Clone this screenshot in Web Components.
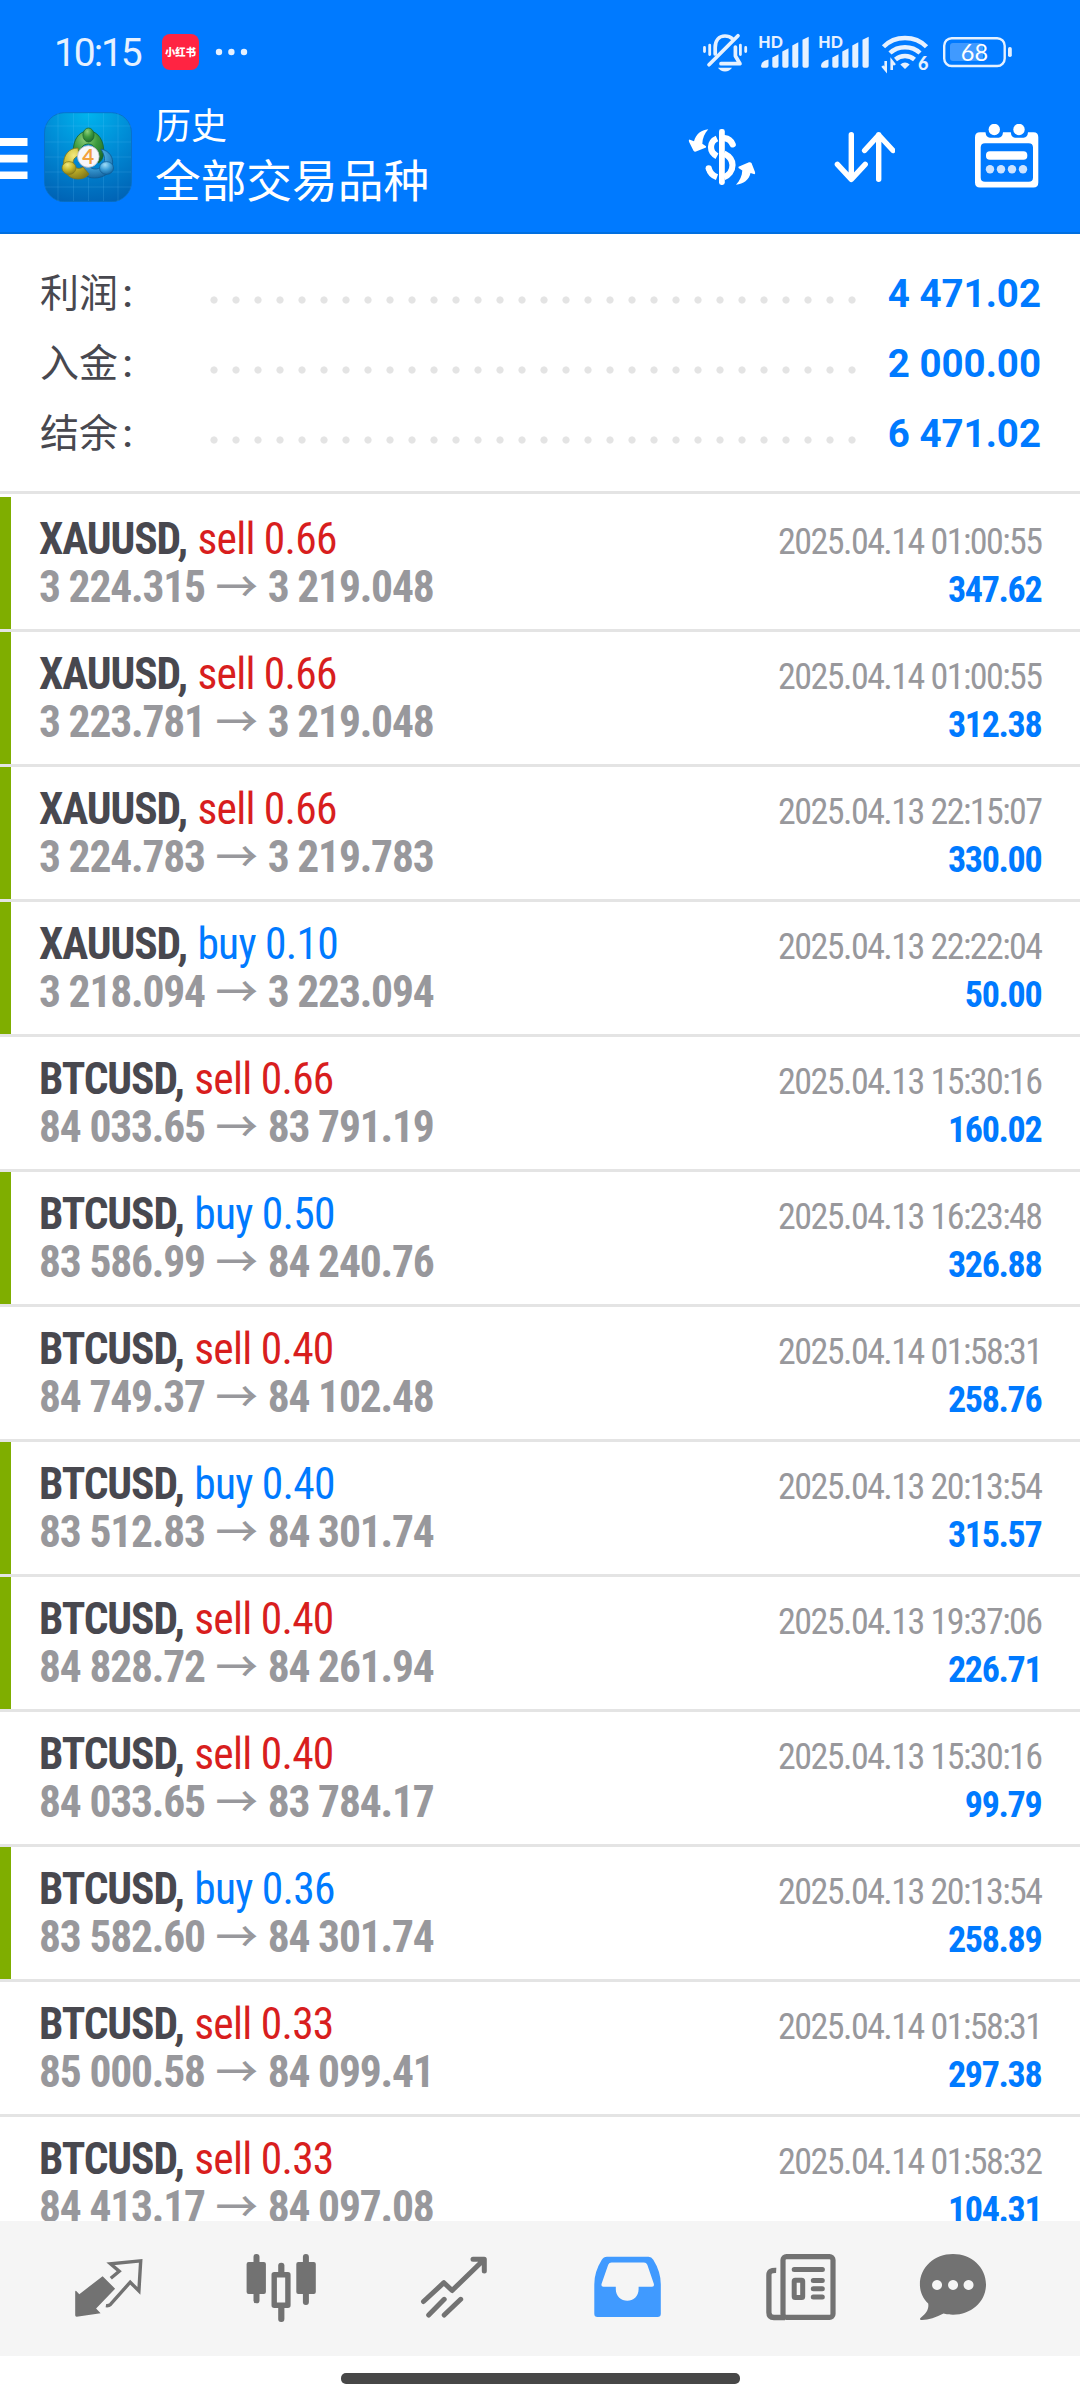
<!DOCTYPE html>
<html lang="zh-CN">
<head>
<meta charset="utf-8">
<title>历史</title>
<style>
html,body{margin:0;padding:0;background:#fff}
body{width:1080px;height:2400px;overflow:hidden;font-family:Roboto,"Noto Sans CJK SC",sans-serif}
</style>
</head>
<body>
<history-app></history-app>
<script>
const define = (name, html, setup) => {
  const t = document.createElement('template');
  t.innerHTML = html;
  customElements.define(name, class extends HTMLElement {
    constructor() {
      super();
      this.attachShadow({mode: 'open'}).appendChild(t.content.cloneNode(true));
    }
    connectedCallback() { if (setup) setup(this, this.shadowRoot); }
  });
};

define('app-logo', `
<style>:host{display:block;width:88px;height:90px}svg{display:block}</style>
<svg width="88" height="90" viewBox="44 112 88 90">
<defs>
<radialGradient id="bg" cx=".5" cy="0" r="1.05"><stop offset="0" stop-color="#00b4ee"/><stop offset=".55" stop-color="#0086d2"/><stop offset="1" stop-color="#0062b4"/></radialGradient>
<radialGradient id="g" cx=".4" cy=".25" r=".8"><stop offset="0" stop-color="#8fd07a"/><stop offset=".5" stop-color="#3c9a3e"/><stop offset="1" stop-color="#1c6a2c"/></radialGradient>
<radialGradient id="y" cx=".4" cy=".25" r=".8"><stop offset="0" stop-color="#f3ea80"/><stop offset=".5" stop-color="#c9b92c"/><stop offset="1" stop-color="#857a18"/></radialGradient>
<radialGradient id="b" cx=".4" cy=".25" r=".8"><stop offset="0" stop-color="#9fdcf8"/><stop offset=".5" stop-color="#3c9fd8"/><stop offset="1" stop-color="#12609c"/></radialGradient>
</defs>
<rect x="44.5" y="112.7" width="87" height="89" rx="20" fill="url(#bg)" stroke="#0a6fc0" stroke-width=".8"/>
<path d="M58 113v88M73.500 113v88M88.500 113v88M103.500 113v88M118 113v88M45 126h86M45 142h86M45 157h86M45 172h86M45 187h86" stroke="#6fd0ff" stroke-opacity=".16" fill="none"/>
<path d="M73.500 155C72 140 79 131 88.500 131S105 141 103.500 154c-.5 4-2 7-5 9l-5-5c4-5 2-14-5-14s-8.500 6-8 11z" fill="url(#g)" stroke="#17602c" stroke-width=".8"/>
<path d="M101 149c9 2 12.500 9 11.500 15.500-1.500 8.500-9 13.500-18 13.500-8 0-12-4-14-10l7-3c5 6 13 5 16-1 2-5 1-9-2.500-15z" fill="url(#b)" stroke="#0f5a92" stroke-width=".8"/>
<path d="M78 148c-9 0-14.500 7-14.500 16 0 9 6 15 14.500 15 5 0 9-2 11-5l-6-7c-4 3-10 1-10-4 0-4 3-7 6-7z" fill="url(#y)" stroke="#80761a" stroke-width=".8"/>
<ellipse cx="88.500" cy="135" rx="5.600" ry="7" fill="url(#g)" stroke="#17602c" stroke-width=".7"/>
<ellipse cx="69" cy="168" rx="7" ry="6.400" fill="url(#y)" stroke="#80761a" stroke-width=".7"/>
<ellipse cx="106.500" cy="168" rx="7" ry="6.400" fill="url(#b)" stroke="#0f5a92" stroke-width=".7"/>
<circle cx="88.300" cy="156.500" r="10.800" fill="#f7f7fa" stroke="#b9b9c4" stroke-width=".8"/>
<text x="88.300" y="163.800" text-anchor="middle" font-family="Lato,sans-serif" font-weight="700" font-size="20.500" fill="#f2a13c">4</text>
</svg>`);

define('status-bar', `
<style>
:host{display:flex;align-items:center;height:104px;color:#e6f1ff}
.time{margin-left:54px;width:98px;font-size:39px;line-height:104px;letter-spacing:-2.1px;padding-top:1px}
.app{display:flex;align-items:center;justify-content:center;width:37px;height:36px;margin-left:10px;border-radius:8px;background:#ff2442;color:#fff;font:900 10.300px/36px "Noto Sans CJK SC",sans-serif}
.more{margin-left:16px}
.sys{margin-left:auto;margin-right:65px}
svg{display:block}
</style>
<span class="time">10:15</span>
<span class="app">小红书</span>
<svg class="more" width="34" height="8" fill="#e6f1ff"><circle cx="4" cy="4" r="3.200"/><circle cx="16.400" cy="4" r="3.200"/><circle cx="29" cy="4" r="3.200"/></svg>
<svg class="sys" width="315" height="44" viewBox="700 30 315 44" fill="#e6f1ff">
<g fill="none" stroke="#e6f1ff" stroke-width="3.700" stroke-linecap="round" stroke-linejoin="round">
<path d="M715.200 54V47.500C715.200 40.500 719 36 725 36c3 0 5.500 1 7.300 2.600M735.400 47v9l4.600 7.700H721"/>
<path d="M709 64.700 738 35.700"/>
<path d="M704.500 47.500v4M709.700 45.200v9.300M740.400 45.200v9.300M745.700 47.500v4" stroke-width="2.800"/>
</g>
<path d="M718 67.800h14c-1.500 2.400-4 3.600-7 3.600s-5.500-1.200-7-3.600z"/>
<g id="sig">
<text x="758.300" y="48" font-family="Lato,sans-serif" font-weight="900" font-size="16" textLength="24.500" lengthAdjust="spacingAndGlyphs">HD</text>
<path d="M761 66q0-5 7.500-6.500v6.500q0 1.700-1.700 1.700h-4.300q-1.500 0-1.500-1.700zM772.300 57.500l6.200-3.200v11.700q0 1.700-1.700 1.700h-2.800q-1.700 0-1.700-1.700zM782.300 51.500l6.200-3.200v17.700q0 1.700-1.700 1.700h-2.800q-1.700 0-1.700-1.700zM792.300 45.500l6-3.200v23.700q0 1.700-1.700 1.700h-2.600q-1.700 0-1.700-1.700zM802.500 39.800l6.200-3v29.200q0 1.700-1.700 1.700h-2.800q-1.700 0-1.700-1.700z"/>
</g>
<use href="#sig" x="60"/>
<g fill="none" stroke="#e6f1ff" stroke-width="4.500">
<path d="M883.500 46.800Q892 38 905 38t21.500 8.800M890 53Q896 47.200 905 47.200t15 5.800M895.500 59.500Q899.500 56 905 56t9.500 3.500"/>
</g>
<path d="M900.300 64.500q4.700-4 9.400 0L905 69z"/>
<path d="M885.700 61v9l-3.400-4M891.700 70v-9l3.200 4" fill="none" stroke="#e6f1ff" stroke-width="2.600"/>
<text x="918" y="70.300" font-family="Lato,sans-serif" font-weight="900" font-size="18">6</text>
<rect x="944.200" y="38.200" width="60.500" height="27.800" rx="7.500" fill="none" stroke="#e6f1ff" stroke-width="2.400"/>
<rect x="950" y="43" width="33" height="18" rx="3" fill="#409aff"/>
<rect x="1008" y="47" width="3.800" height="10" rx="1.800"/>
<text x="974.500" y="61" text-anchor="middle" font-family="Lato,sans-serif" font-size="23.500" fill="#fff">68</text>
</svg>`);

define('title-bar', `
<style>
:host{display:flex;height:128px;border-bottom:2px solid #006fe0;color:#fff;font-family:"Noto Sans CJK SC",sans-serif}
svg{display:block}
.menu{margin-top:34px;width:28px;flex:none}
app-logo{margin:8px 0 0 16px}
.t{margin-left:23px;display:flex;flex-direction:column;margin-top:-3px}
.a{font-size:36px;line-height:44px}
.b{font-size:45.700px;line-height:60px;margin-top:3px}
.acts{margin:20px 40px 0 auto;display:flex;align-items:flex-start}
.acts svg+svg{margin-left:76px}
.acts svg:last-child{margin-left:77px}
</style>
<svg class="menu" width="28" height="41" fill="#fff"><path d="M0 0h27.500v8H0zM0 16.800h27.500v7.600H0zM0 33.500h27.500v7.500H0z"/></svg>
<app-logo></app-logo>
<div class="t"><span class="a">历史</span><span class="b">全部交易品种</span></div>
<div class="acts">
<svg width="70" height="68" viewBox="687 124 70 68" fill="#fff">
<rect x="719" y="129" width="5.800" height="56" rx="2.400"/>
<g fill="none" stroke="#fff" stroke-width="6.200">
<path d="M717 138.500C709 142 709 152 717 156.200" />
<path d="M724.500 138.200c5 .6 7 3.500 8.200 6.200" stroke-linecap="round"/>
<path d="M724 153.500c5 2.500 8.500 6 8.500 11.500 0 6-4 10.500-8.500 12.200"/>
<path d="M708.800 168.500c1.200 4.500 4 7.200 8.200 8.700" />
</g>
<circle cx="708.700" cy="168.300" r="3.100"/>
<path d="M708.300 129.300C701 130 696 134 694 141.300L689.300 139.500Q688.500 140 689 141.800L693.500 150.800Q694.500 152 696 151.500L706 147.500V146.300L702.300 143.800C702.500 138 704.500 133.500 708.300 129.300z"/>
<path d="M736 184.700C743.500 184 749 180 750.500 173L754.500 174.300Q755.500 174 755 172L751.500 163Q750.500 161.800 749 162.300L738.500 166.800V168L742.300 170.500C742 176 740 180.500 736 184.700z"/>
</svg>
<svg width="62" height="60" viewBox="833 124 62 60" fill="none" stroke="#fff" stroke-width="5.400" stroke-linecap="round" stroke-linejoin="round"><path d="M851.300 134.700v44.500M837.400 164.300l13.900 15 13.900-15M878.700 179.200v-44.500M864.600 150.500l14.100-15.500 14.300 15.500"/></svg>
<svg width="68" height="68" viewBox="972 124 68 68" fill="#fff">
<path fill-rule="evenodd" d="M980 132.300h5.500Q986 137.700 990 137.700h8.500q4 0 4.500-5.400h7.800Q1011.300 137.700 1015 137.700h8.500q4 0 4.500-5.400h5.500q4.800 0 4.800 5v45.200q0 5-4.800 5H980q-5 0-5-5v-45.200q0-5 5-5zM985 143.200q-4.300 0-4.300 4.300v30q0 4.300 4.300 4.300h43.700q4.300 0 4.300-4.300v-30q0-4.300-4.300-4.300z"/>
<circle cx="994.300" cy="129.500" r="5.700"/><circle cx="1019" cy="129.500" r="5.700"/>
<rect x="986" y="151.300" width="41.300" height="8.400" rx="3.800"/>
<g fill="#cce3ff"><circle cx="990" cy="169.300" r="4.200"/><circle cx="1001" cy="169.300" r="4.200"/><circle cx="1012" cy="169.300" r="4.200"/><circle cx="1023" cy="169.300" r="4.200"/></g>
</svg>
</div>`);

define('summary-row', `
<style>
:host{display:flex;align-items:center;height:70px;padding:0 39px 0 40px;line-height:70px}
.l{width:162.500px;font-size:39px;color:#48484f;font-family:"Noto Sans CJK SC",sans-serif}
.c{font:500 39px/70px Roboto,sans-serif;margin-left:4.500px}
.d{width:660px;height:10px;background:radial-gradient(circle at 11px 5px,#e4e4e4 3.200px,transparent 4px) 0 0/22px 10px;margin-top:16px}
.v{margin-left:auto;font-size:38.500px;font-weight:700;color:#007aff;padding-top:3px}
</style>
<span class="l"><slot name="label"></slot><span class="c">:</span></span><i class="d"></i><span class="v"><slot></slot></span>`);

define('deal-row', `
<style>
:host{display:block;box-sizing:border-box;height:135px;border-bottom:3px solid #e4e4e4}
.in{box-sizing:border-box;height:132px;padding:19px 38px 0 28px;border-left:11px solid transparent}
:host([closed]) .in{border-left-color:#7fae00}
.ln{display:flex;justify-content:space-between;align-items:baseline;height:48px;line-height:48px;font-family:"Roboto Condensed",Roboto,sans-serif;font-stretch:75%;white-space:pre}
.s{font-size:43.500px;color:#48484f;letter-spacing:-1.1px}
.s b{font-weight:700}
.q{color:#d81e1e;letter-spacing:-.75px;margin-left:1.500px;font-weight:430}
:host([side=buy]) .q{color:#007aff}
.p{font-size:43.500px;font-weight:700;color:#98989c;letter-spacing:-1.2px}
.ar{letter-spacing:0;margin:0 .8px 0 2px;font:500 42.500px/30px "Noto Sans CJK SC",sans-serif}
.d{font-size:36px;color:#98989c;letter-spacing:-1.55px;margin-right:.5px}
.r{font-size:36px;font-weight:700;color:#007aff;letter-spacing:-1.35px;margin-right:.7px}
</style>
<div class="in">
<div class="ln"><span class="s"><b id="sym"></b> <span class="q" id="q"></span></span><span class="d" id="d"></span></div>
<div class="ln"><span class="p"><span id="f"></span> <span class="ar">→</span> <span id="t"></span></span><span class="r" id="r"></span></div>
</div>`, (el, r) => {
  const a = n => el.getAttribute(n);
  r.getElementById('sym').textContent = a('symbol') + ',';
  r.getElementById('q').textContent = a('side') + ' ' + a('lots');
  r.getElementById('d').textContent = a('time');
  r.getElementById('f').textContent = a('from');
  r.getElementById('t').textContent = a('to');
  r.getElementById('r').textContent = a('profit');
});

define('nav-bar', `
<style>
:host{display:flex;height:135px;background:#f5f5f5}
svg{display:block}
</style>
<svg width="1080" height="135" viewBox="0 2221 1080 135" fill="#727272">
<path d="M76 2290.700l3.300 3.500 23.300-18 12.500 12.500-19 19.700 4.500 4.800-24 3.500q-1.400 0-1.400-1.400v-23.500q0-1.100.8-1.100z"/>
<path d="M110.800 2278.300l8.400-7-8.700-7.500 30.200-2.900-1.800 30-8.700-8.700-19.500 22q-2 2-4.800 1.500" fill="none" stroke="#727272" stroke-width="3.400"/>
<rect x="246.600" y="2262" width="19.300" height="32" rx="2"/><rect x="253.500" y="2254" width="6" height="49.300" rx="2.900"/>
<rect x="296.300" y="2262" width="19.500" height="32" rx="2"/><rect x="302.900" y="2254" width="6" height="51" rx="2.900"/>
<rect x="278.200" y="2262.700" width="6.200" height="13" rx="2.900"/><rect x="278.200" y="2304" width="6.200" height="18" rx="2.900"/>
<rect x="274.200" y="2274.700" width="13.700" height="30.600" fill="none" stroke="#727272" stroke-width="5.400" stroke-linejoin="round"/>
<path d="M423.500 2301.500l20.400-18.800 8.200 7.800 32-31M473 2259.300h11.300v11.700M428.700 2315l15.500-15.700M444.200 2315l16.500-15.700" fill="none" stroke="#727272" stroke-width="5" stroke-linecap="round" stroke-linejoin="round"/>
<path fill="#409aff" fill-rule="evenodd" d="M607 2256.700h41.500q3 0 4.800 3 7.500 12 7.500 24.500v29.500q0 3.300-3.300 3.300h-60q-3.200 0-3.200-3.300v-29.500q0-12.500 7.500-24.500 1.800-3 5.200-3zM611.500 2262.500q-2.300 0-3.300 2.200l-6.600 19q-.8 3 1.700 3h12.500v2.500c0 7 5.500 11.500 11.500 11.500s11.300-4.500 11.300-11.500v-2.500h13.500q2.500 0 1.700-3l-6.500-19q-1-2.200-3.300-2.200z"/>
<g fill="none" stroke="#727272">
<rect x="783" y="2256.600" width="50" height="60.800" rx="3.500" stroke-width="5.200"/>
<path d="M776.200 2270.400q-7.300-.4-7.300 4.600v37.500q0 5 5 5H785" stroke-width="5.300"/>
<rect x="794.200" y="2280.200" width="8.500" height="17.300" rx="1" stroke-width="5"/>
<path d="M794.200 2269.500h28.200M813.300 2280.400h9M813.300 2288.700h9M813.300 2297h9" stroke-width="5" stroke-linecap="round"/>
</g>
<path fill-rule="evenodd" d="M953 2254c18.500 0 33 13.200 33 30.400s-14.500 30.300-33 30.300c-3.400 0-6.700-.4-9.500-1.200q-11.500 6-21.500 6.500c-2 0-2.500-1-1.500-2 6.500-5 8.500-9.500 7.700-14.500-5.300-5-8.300-11.700-8.300-19.100 0-17.200 14.600-30.400 33.100-30.400zM937 2280a5 5 0 1 0 .1 0zM953 2280a5 5 0 1 0 .1 0zM968.500 2280a5 5 0 1 0 .1 0z"/>
</svg>`);

define('history-app', `
<style>
:host{display:flex;flex-direction:column;width:1080px;height:2400px;background:#fff}
header{flex:none;background:#007aff}
.sum{flex:none;height:260px;box-sizing:border-box;padding-top:23px;border-bottom:3px solid #e4e4e4}
.list{flex:1;min-height:0;overflow:hidden;padding-top:3px}
nav-bar{flex:none}
footer{flex:none;height:44px;display:flex;justify-content:center;align-items:flex-start}
footer i{width:399px;height:10.500px;margin-top:17.300px;border-radius:5px;background:#474747}
</style>
<header><status-bar></status-bar><title-bar></title-bar></header>
<div class="sum">
<summary-row><span slot="label">利润</span>4 471.02</summary-row>
<summary-row><span slot="label">入金</span>2 000.00</summary-row>
<summary-row><span slot="label">结余</span>6 471.02</summary-row>
</div>
<div class="list"></div>
<nav-bar></nav-bar>
<footer><i></i></footer>`, (el, r) => {
  const deals = [
    ['XAUUSD','sell','0.66','3 224.315','3 219.048','2025.04.14 01:00:55','347.62',1],
    ['XAUUSD','sell','0.66','3 223.781','3 219.048','2025.04.14 01:00:55','312.38',1],
    ['XAUUSD','sell','0.66','3 224.783','3 219.783','2025.04.13 22:15:07','330.00',1],
    ['XAUUSD','buy','0.10','3 218.094','3 223.094','2025.04.13 22:22:04','50.00',1],
    ['BTCUSD','sell','0.66','84 033.65','83 791.19','2025.04.13 15:30:16','160.02',0],
    ['BTCUSD','buy','0.50','83 586.99','84 240.76','2025.04.13 16:23:48','326.88',1],
    ['BTCUSD','sell','0.40','84 749.37','84 102.48','2025.04.14 01:58:31','258.76',0],
    ['BTCUSD','buy','0.40','83 512.83','84 301.74','2025.04.13 20:13:54','315.57',1],
    ['BTCUSD','sell','0.40','84 828.72','84 261.94','2025.04.13 19:37:06','226.71',1],
    ['BTCUSD','sell','0.40','84 033.65','83 784.17','2025.04.13 15:30:16','99.79',0],
    ['BTCUSD','buy','0.36','83 582.60','84 301.74','2025.04.13 20:13:54','258.89',1],
    ['BTCUSD','sell','0.33','85 000.58','84 099.41','2025.04.14 01:58:31','297.38',0],
    ['BTCUSD','sell','0.33','84 413.17','84 097.08','2025.04.14 01:58:32','104.31',0]
  ];
  const list = r.querySelector('.list');
  for (const [symbol, side, lots, from, to, time, profit, closed] of deals) {
    const row = document.createElement('deal-row');
    for (const [k, v] of Object.entries({symbol, side, lots, from, to, time, profit})) row.setAttribute(k, v);
    if (closed) row.setAttribute('closed', '');
    list.appendChild(row);
  }
});
</script>
</body>
</html>
